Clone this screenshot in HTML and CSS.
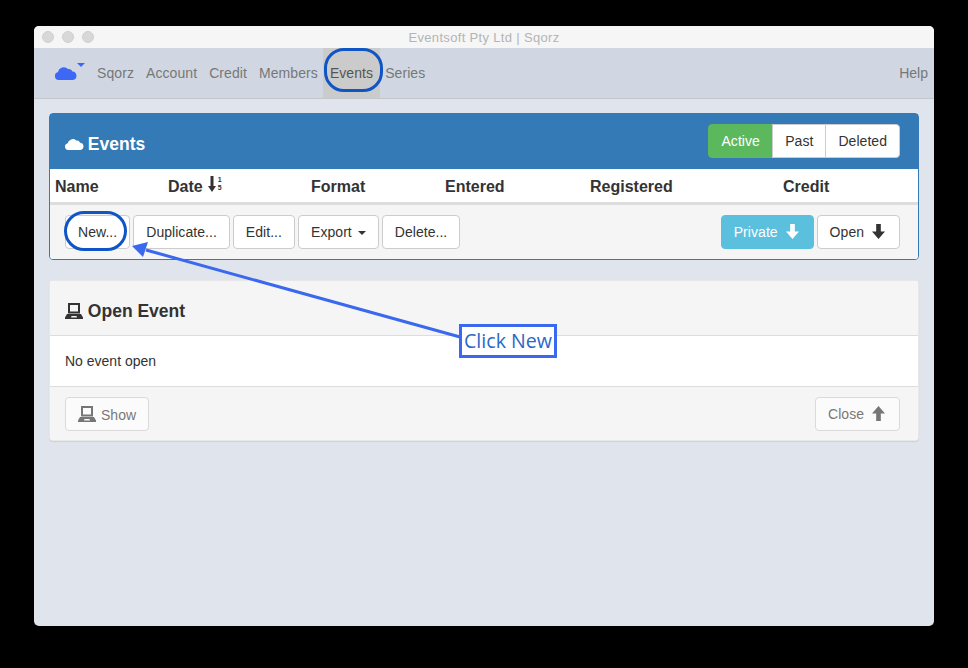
FILE: index.html
```html
<!DOCTYPE html>
<html lang="en">
<head>
    <meta charset="UTF-8">
    <title>Eventsoft Pty Ltd | Sqorz</title>
    <link rel="stylesheet" href="styles.css">
</head>
<body>
    <svg width="0" height="0" class="defs">
        <symbol id="cloud" viewBox="0 0 22 14">
            <path d="M4 14a4 4 0 0 1-1-7.900A6 6 0 0 1 13 3a4 4 0 0 1 4.500 2.500A4.300 4.300 0 0 1 18 14z"/>
        </symbol>
        <symbol id="laptop" viewBox="0 0 18 16">
            <path d="M3 0h12v10.500H3zM5 2v6.500h8V2zM2 11h14l2 3.500V16H0v-1.500zM6.500 13l-.5 1.500h6l-.5-1.500z" fill-rule="evenodd"/>
        </symbol>
        <symbol id="arrow-down" viewBox="0 0 14 16">
            <path d="M4.500 0h5v8H14l-7 8-7-8h4.500z"/>
        </symbol>
        <symbol id="arrow-up" viewBox="0 0 14 16">
            <path d="M4.500 16h5V8H14L7 0 0 8h4.500z"/>
        </symbol>
        <symbol id="sort-down" viewBox="0 0 8 16">
            <path d="M2.500 0h3v10H8l-4 6-4-6h2.500z"/>
        </symbol>
    </svg>

    <div class="window">
        <div class="titlebar">
            <div class="lights"><span></span><span></span><span></span></div>
            <div class="title">Eventsoft Pty Ltd | Sqorz</div>
        </div>

        <nav class="navbar">
            <a class="brand" href="#">
                <svg class="brand-cloud"><use href="#cloud"/></svg>
                <span class="brand-caret"></span>
            </a>
            <ul class="nav-list">
                <li><a href="#">Sqorz</a></li>
                <li><a href="#">Account</a></li>
                <li><a href="#">Credit</a></li>
                <li><a href="#">Members</a></li>
                <li class="active"><a href="#">Events</a></li>
                <li><a href="#">Series</a></li>
            </ul>
            <a class="help" href="#">Help</a>
        </nav>

        <main class="content">
            <section class="panel panel-primary">
                <div class="events-heading">
                    <h3><svg class="icon-cloud"><use href="#cloud"/></svg> Events</h3>
                    <div class="btn-group">
                        <button class="btn btn-success">Active</button>
                        <button class="btn">Past</button>
                        <button class="btn">Deleted</button>
                    </div>
                </div>
                <div class="table-head">
                    <div>Name</div>
                    <div class="sort-col">Date
                        <svg class="icon-sort"><use href="#sort-down"/></svg>
                        <span class="sort-digits">1<br>5</span>
                    </div>
                    <div>Format</div>
                    <div>Entered</div>
                    <div>Registered</div>
                    <div>Credit</div>
                </div>
                <div class="toolbar">
                    <button class="btn">New...</button>
                    <button class="btn">Duplicate...</button>
                    <button class="btn">Edit...</button>
                    <button class="btn">Export <span class="caret"></span></button>
                    <button class="btn">Delete...</button>
                    <div class="spacer"></div>
                    <button class="btn btn-info">Private <svg class="icon-arrow"><use href="#arrow-down"/></svg></button>
                    <button class="btn">Open <svg class="icon-arrow"><use href="#arrow-down"/></svg></button>
                </div>
            </section>

            <section class="panel panel-default">
                <div class="open-heading">
                    <h3><svg class="icon-laptop"><use href="#laptop"/></svg> Open Event</h3>
                </div>
                <div class="panel-body">No event open</div>
                <div class="panel-footer">
                    <button class="btn btn-disabled"><svg class="icon-laptop icon-show"><use href="#laptop"/></svg> Show</button>
                    <div class="spacer"></div>
                    <button class="btn btn-disabled">Close <svg class="icon-arrow"><use href="#arrow-up"/></svg></button>
                </div>
            </section>
        </main>

        <!-- annotations drawn over the screenshot -->
        <div class="ring ring-events"></div>
        <div class="ring ring-new"></div>
        <svg class="arrow-note" width="900" height="600" viewBox="34 26 900 600">
            <line x1="146" y1="250" x2="460" y2="337"/>
            <polygon points="132,246 148,242 143,257"/>
        </svg>
        <div class="note">Click New</div>
    </div>
</body>
</html>
```

FILE: styles.css
```css
* {
    box-sizing: border-box;
}
body {
    margin: 0;
    padding: 26px 34px 42px;
    height: 668px;
    overflow: hidden;
    background-color: #000;
    font-family: "Liberation Sans", Arial, sans-serif;
    font-size: 14px;
    color: #333;
}
.defs {
    position: absolute;
}
svg {
    fill: currentColor;
}
.window {
    position: relative;
    width: 900px;
    height: 600px;
    border-radius: 5px;
    overflow: hidden;
    background-color: #e0e4ed;
    display: flex;
    flex-direction: column;
}
.titlebar {
    position: relative;
    height: 22px;
    background-color: #f6f6f6;
    display: flex;
    align-items: center;
    justify-content: center;
}
.lights {
    position: absolute;
    left: 8px;
    top: 5px;
    display: flex;
    gap: 8px;
}
.lights span {
    width: 12px;
    height: 12px;
    border-radius: 50%;
    background-color: #d8d8d8;
    border: 1px solid #cfcfcf;
}
.title {
    font-size: 13px;
    letter-spacing: 0.33px;
    color: #b4b4b4;
}
.navbar {
    height: 51px;
    background-color: #d0d7e2;
    border-bottom: 1px solid #c2c7cf;
    display: flex;
    align-items: stretch;
    flex-shrink: 0;
}
.brand {
    position: relative;
    width: 57px;
    color: #3c68f5;
}
.brand-cloud {
    position: absolute;
    left: 21px;
    top: 18px;
    width: 22px;
    height: 14px;
}
.brand-caret {
    position: absolute;
    left: 43px;
    top: 15px;
    border-top: 4px solid #3c68f5;
    border-left: 4px solid transparent;
    border-right: 4px solid transparent;
}
.nav-list {
    list-style: none;
    display: flex;
    margin: 0;
    padding: 0;
    letter-spacing: 0.08px;
}
.nav-list a {
    display: flex;
    align-items: center;
    height: 100%;
    padding: 0 6px;
    color: #777;
    text-decoration: none;
}
.nav-list .active {
    margin: 0 -1px;
    background-color: #cbcbcb;
}
.nav-list .active a {
    padding: 0 7px;
    color: #555;
}
.help {
    margin-left: auto;
    margin-right: 6px;
    display: flex;
    align-items: center;
    color: #777;
    text-decoration: none;
}
.content {
    padding: 14px 15px;
}
.panel {
    border-radius: 4px;
    background-color: #fff;
    border: 1px solid;
}
.panel-primary {
    border-color: #337ab7;
    margin-bottom: 20px;
}
.panel-default {
    border-color: #e7e7e7;
    box-shadow: 0 1px 1px rgba(0, 0, 0, 0.08);
}
h3 {
    margin: 0;
    font-size: 17.5px;
    line-height: 20px;
}
.events-heading {
    height: 55px;
    background-color: #337ab7;
    color: #fff;
    display: flex;
    align-items: center;
    justify-content: space-between;
    padding: 0 18px 0 15px;
}
.events-heading h3 {
    margin-top: 4px;
}
.icon-cloud {
    width: 19px;
    height: 12px;
    margin-right: -1px;
}
.btn-group {
    display: flex;
    margin-bottom: 2px;
}
.btn {
    height: 34px;
    padding: 0 12px;
    font-family: inherit;
    font-size: 14px;
    letter-spacing: 0.05px;
    color: #333;
    background-color: #fff;
    border: 1px solid #ccc;
    border-radius: 4px;
}
.btn-group .btn {
    border-radius: 0;
    margin-left: -1px;
}
.btn-group .btn:first-child {
    margin-left: 0;
    border-radius: 4px 0 0 4px;
}
.btn-group .btn:last-child {
    border-radius: 0 4px 4px 0;
}
.btn-success.btn {
    width: 65px;
    color: #fff;
    background-color: #5cb85c;
    border-color: #5cb85c;
}
.btn-info {
    color: #fff;
    background-color: #5bc0de;
    border-color: #5bc0de;
}
.btn-disabled {
    opacity: 0.65;
    background-color: #fff;
}
.table-head {
    height: 36px;
    padding-top: 2px;
    padding-left: 5px;
    display: grid;
    grid-template-columns: 113px 143px 134px 145px 193px 1fr;
    align-items: center;
    font-size: 16px;
    font-weight: bold;
    border-bottom: 3px solid #ddd;
}
.sort-col {
    display: flex;
    align-items: center;
    gap: 4px;
}
.icon-sort {
    width: 8px;
    height: 16px;
    margin-left: 1px;
    margin-top: -6px;
    fill: #333;
}
.sort-digits {
    font-size: 7px;
    line-height: 8px;
    margin-left: -2px;
    margin-top: -6px;
    font-weight: bold;
}
.toolbar {
    height: 54px;
    background-color: #f5f5f5;
    border-radius: 0 0 3px 3px;
    padding: 10px 18px 0 15px;
    display: flex;
    align-items: flex-start;
    gap: 3px;
}
.spacer {
    flex: 1;
}
.icon-arrow {
    width: 13px;
    height: 15px;
    margin-left: 4px;
    margin-right: 2px;
    vertical-align: -2px;
}
.caret {
    display: inline-block;
    margin-left: 2px;
    vertical-align: 2px;
    border-top: 4px solid #333;
    border-left: 4px solid transparent;
    border-right: 4px solid transparent;
}
.open-heading {
    height: 55px;
    padding: 0 15px;
    background-color: #f5f5f5;
    border-bottom: 1px solid #ddd;
    display: flex;
    align-items: center;
}
.open-heading h3 {
    margin-top: 6px;
}
.icon-laptop {
    width: 18px;
    height: 16px;
    vertical-align: -2px;
}
.icon-show {
    margin-right: 1px;
}
.panel-body {
    height: 50px;
    padding: 0 15px;
    display: flex;
    align-items: center;
}
.panel-footer {
    height: 54px;
    padding: 10px 18px 0 15px;
    background-color: #f5f5f5;
    border-top: 1px solid #ddd;
    border-radius: 0 0 3px 3px;
    display: flex;
    align-items: flex-start;
}
.ring {
    position: absolute;
    border: 3px solid #0f55c5;
    border-radius: 20px;
}
.ring-events {
    left: 290px;
    top: 22px;
    width: 59px;
    height: 44px;
}
.ring-new {
    left: 30px;
    top: 185px;
    width: 63px;
    height: 40px;
}
.arrow-note {
    position: absolute;
    left: 0;
    top: 0;
}
.arrow-note line {
    stroke: #3a68ee;
    stroke-width: 3;
}
.arrow-note polygon {
    fill: #3a68ee;
}
.note {
    position: absolute;
    left: 425px;
    top: 298px;
    width: 98px;
    height: 34px;
    background-color: #fff;
    border: 3px solid #3a68ee;
    color: #2a68c8;
    font-family: "Open Sans", sans-serif;
    font-size: 19.6px;
    line-height: 28px;
    text-align: center;
    white-space: nowrap;
}
```
